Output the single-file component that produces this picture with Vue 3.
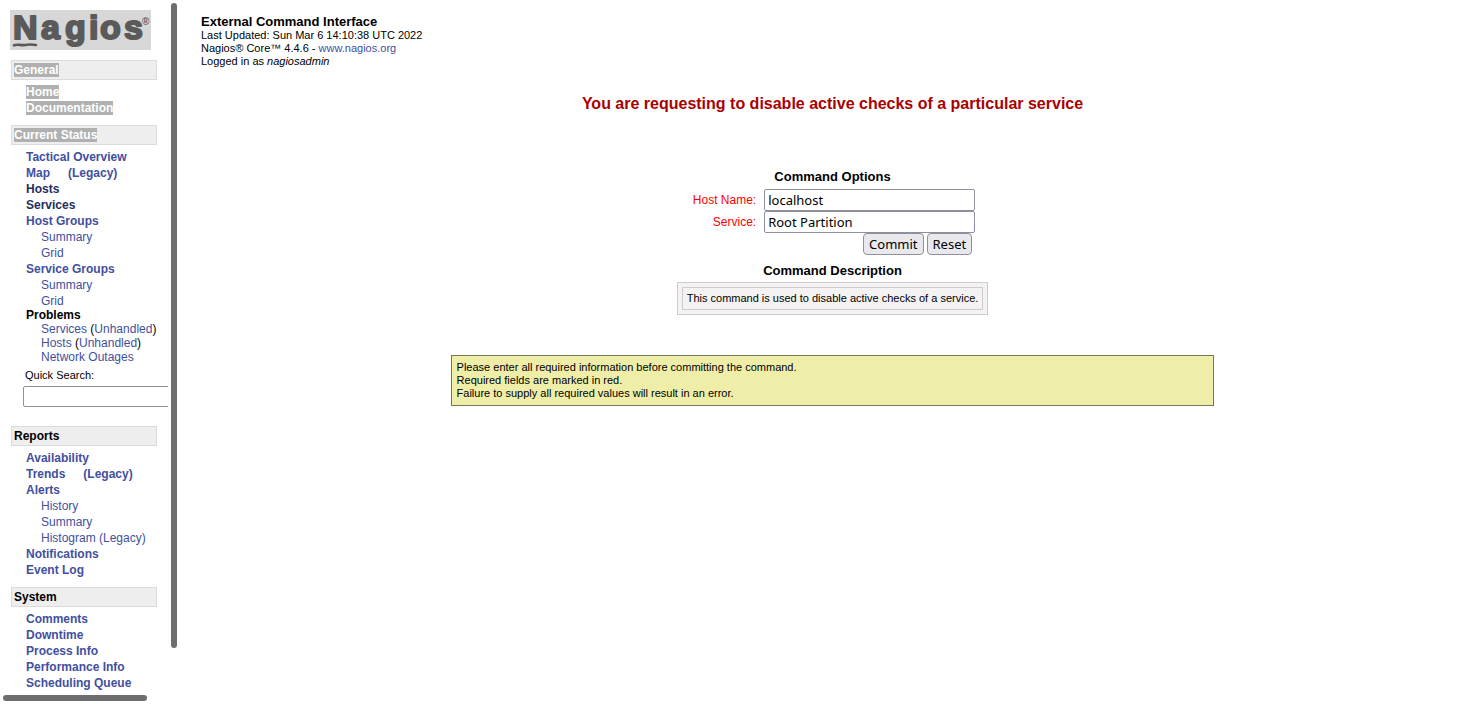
<script setup>
import { ref } from 'vue'

const hostName = ref('localhost')
const service = ref('Root Partition')
const search = ref('')

const general = ['Home', 'Documentation']
const status = [
  { links: ['Tactical Overview'] },
  { links: ['Map', '(Legacy)'] },
  { links: ['Hosts'], dark: true },
  { links: ['Services'], dark: true },
  { links: ['Host Groups'], children: ['Summary', 'Grid'] },
  { links: ['Service Groups'], children: ['Summary', 'Grid'] }
]
const reports = [
  { links: ['Availability'] },
  { links: ['Trends', '(Legacy)'] },
  { links: ['Alerts'], children: ['History', 'Summary', 'Histogram (Legacy)'] },
  { links: ['Notifications'] },
  { links: ['Event Log'] }
]
const system = ['Comments', 'Downtime', 'Process Info', 'Performance Info', 'Scheduling Queue']
</script>

<template>
  <div class="frames">
    <aside class="side">
      <nav class="nav">
        <a class="logo" href="#" aria-label="Nagios">
          <svg width="141" height="40" viewBox="0 0 141 40">
            <rect width="141" height="40" fill="#d7d7d7" />
            <text class="wordmark" x="3 31 55 79 90 114" y="29">Nagios</text>
            <path d="M4 35.3C8 33.6 11 35.8 15 34.9C19 34.1 22 34.3 26 35" fill="none" stroke="#5a5a5a" stroke-width="2.6" stroke-linecap="round" />
            <text class="mark" x="132" y="15">®</text>
          </svg>
        </a>

        <h2 class="section"><span class="picked">General</span></h2>
        <ul class="menu">
          <li v-for="item in general" :key="item"><a class="picked" href="#">{{ item }}</a></li>
        </ul>

        <h2 class="section"><span class="picked">Current Status</span></h2>
        <ul class="menu status">
          <li v-for="item in status" :key="item.links[0]">
            <span class="pair">
              <a v-for="link in item.links" :key="link" :class="{ dark: item.dark }" href="#">{{ link }}</a>
            </span>
            <ul v-if="item.children" class="sub">
              <li v-for="child in item.children" :key="child"><a href="#">{{ child }}</a></li>
            </ul>
          </li>
        </ul>
        <div class="problems">
          <strong>Problems</strong>
          <ul>
            <li><a href="#">Services</a> (<a href="#">Unhandled</a>)</li>
            <li><a href="#">Hosts</a> (<a href="#">Unhandled</a>)</li>
            <li><a href="#">Network Outages</a></li>
          </ul>
        </div>
        <form class="search" @submit.prevent>
          <label for="quick">Quick Search:</label>
          <input id="quick" v-model="search" type="text">
        </form>

        <h2 class="section">Reports</h2>
        <ul class="menu">
          <li v-for="item in reports" :key="item.links[0]">
            <span class="pair">
              <a v-for="link in item.links" :key="link" href="#">{{ link }}</a>
            </span>
            <ul v-if="item.children" class="sub">
              <li v-for="child in item.children" :key="child"><a href="#">{{ child }}</a></li>
            </ul>
          </li>
        </ul>

        <h2 class="section">System</h2>
        <ul class="menu">
          <li v-for="item in system" :key="item"><a href="#">{{ item }}</a></li>
        </ul>
      </nav>
      <div class="track vertical"><div class="thumb"></div></div>
      <div class="track horizontal"><div class="thumb"></div></div>
    </aside>

    <main class="main">
      <header class="info">
        <h1>External Command Interface</h1>
        <div>Last Updated: Sun Mar 6 14:10:38 UTC 2022</div>
        <div>Nagios® Core™ 4.4.6 - <a href="#">www.nagios.org</a></div>
        <div>Logged in as <i>nagiosadmin</i></div>
      </header>

      <p class="request">You are requesting to disable active checks of a particular service</p>

      <h2 class="title">Command Options</h2>
      <form class="options" @submit.prevent>
        <label for="host">Host Name:</label>
        <input id="host" v-model="hostName" type="text">
        <label for="service">Service:</label>
        <input id="service" v-model="service" type="text">
        <div class="actions">
          <button type="submit">Commit</button>
          <button type="reset">Reset</button>
        </div>
      </form>

      <h2 class="title">Command Description</h2>
      <div class="description"><p>This command is used to disable active checks of a service.</p></div>

      <div class="notice">
        Please enter all required information before committing the command.<br>
        Required fields are marked in red.<br>
        Failure to supply all required values will result in an error.
      </div>
    </main>
  </div>
</template>

<style>
body {
  margin: 0;
  background: #fff;
}
</style>

<style scoped>
.frames {
  display: grid;
  grid-template-columns: 180px 1fr;
  column-gap: 6px;
  height: 100vh;
  overflow: hidden;
  font-family: "Liberation Sans", Arial, sans-serif;
  font-size: 12px;
  color: #000;
}
h1, h2, p, ul {
  margin: 0;
  padding: 0;
}
ul {
  list-style: none;
}
a {
  color: #414f9f;
  text-decoration: none;
}
input, button {
  box-sizing: border-box;
  height: 22px;
  margin: 0;
  border: 1px solid #8f8f9d;
  font-family: "Noto Sans", "Open Sans", sans-serif;
  font-size: 13px;
  color: #000;
}
input {
  padding: 0 3px;
  border-radius: 2px;
  background: #fff;
}
.side {
  display: grid;
  grid-template-columns: 1fr 12px;
  grid-template-rows: 1fr 12px;
  min-height: 0;
}
.nav {
  overflow: hidden;
  padding: 10px 11px 0;
  line-height: 14px;
}
.logo {
  display: block;
  margin: 0 0 10px -1px;
  height: 40px;
}
.logo svg {
  display: block;
  overflow: visible;
}
.wordmark {
  font-family: "Liberation Sans", Arial, sans-serif;
  font-size: 34px;
  font-weight: bold;
  fill: #5a5a5a;
  stroke: #5a5a5a;
  stroke-width: 2px;
  stroke-linejoin: round;
}
.mark {
  font-family: "Liberation Sans", Arial, sans-serif;
  font-size: 10px;
  font-weight: bold;
  fill: #5a5a5a;
}
.section {
  box-sizing: border-box;
  width: 146px;
  height: 20px;
  padding: 2px;
  border: 1px solid #dbdbdb;
  background: #eee;
  font-size: 12px;
}
.picked {
  background: #b0b0b0;
  color: #fff;
}
.menu {
  padding: 5px 0 10px 15px;
  font-weight: bold;
}
.menu li + li,
.sub {
  margin-top: 2px;
}
.status {
  padding-bottom: 0;
}
.pair {
  display: flex;
  gap: 18px;
}
.dark {
  color: #232f5c;
}
.sub {
  padding-left: 15px;
  font-weight: normal;
}
.problems {
  padding-left: 15px;
  white-space: nowrap;
}
.problems ul {
  padding-left: 15px;
}
.search {
  padding: 5px 0 19px 12px;
}
.search label {
  display: block;
  padding: 0 0 4px 2px;
  font-size: 11px;
  line-height: 13px;
}
.search input {
  display: block;
  width: 180px;
  height: 21px;
}
.track {
  padding: 3px;
}
.thumb {
  border-radius: 3px;
  background: #6e6e6e;
}
.vertical .thumb {
  width: 6px;
  height: 94%;
}
.horizontal .thumb {
  width: 89%;
  height: 6px;
}
.main {
  display: flex;
  flex-direction: column;
  align-items: center;
  padding: 14px 10px;
}
.info {
  align-self: stretch;
  padding-left: 5px;
  font-size: 11px;
  line-height: 13px;
}
.info h1 {
  font-size: 13px;
  line-height: 15px;
}
.request {
  margin: 27px 0 56px;
  font-size: 16px;
  font-weight: bold;
  line-height: 18px;
  color: #a00;
}
.title {
  font-size: 13px;
  line-height: 15px;
}
.options {
  display: grid;
  grid-template-columns: auto 211px;
  column-gap: 8px;
  padding-left: 3px;
  margin: 5px 0 8px;
}
.options label {
  line-height: 22px;
  text-align: right;
  color: #f00;
}
.actions {
  grid-column: 1 / 3;
  display: flex;
  justify-content: flex-end;
  gap: 3px;
  padding-right: 3px;
}
button {
  padding: 0 5px;
  border-radius: 4px;
  background: #e9e9ed;
}
.description {
  margin: 4px 0 40px;
  padding: 4px;
  border: 1px solid #cfcccc;
  background: #f4f2f2;
  font-size: 11px;
  line-height: 13px;
}
.description p {
  padding: 4px;
  border: 1px solid #cfcccc;
}
.notice {
  box-sizing: border-box;
  width: 60%;
  padding: 5px;
  border: 1px solid #777755;
  background: #efeea9;
  font-size: 11px;
  line-height: 13px;
}
</style>
